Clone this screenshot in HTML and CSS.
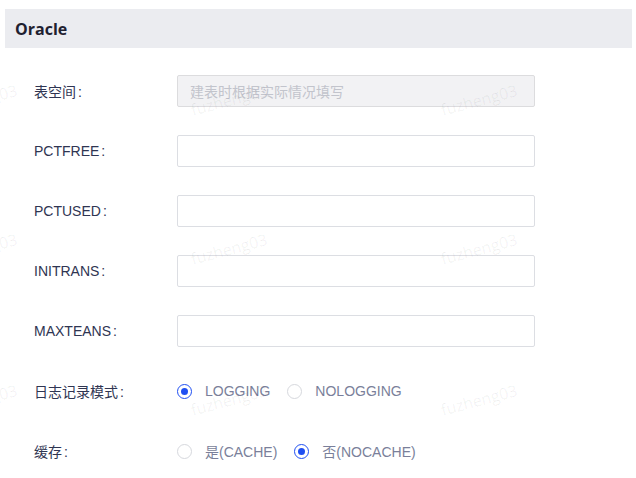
FILE: index.html
```html
<!DOCTYPE html>
<html lang="zh-CN">
<head>
<meta charset="utf-8">
<title>Oracle</title>
<link rel="stylesheet" href="styles.css">
</head>
<body>
<div class="page">
  <div class="panel-header">Oracle</div>
  <div class="form">
    <div class="row">
      <div class="label">表空间<span class="colon">:</span></div>
      <div class="input disabled"><span class="placeholder">建表时根据实际情况填写</span></div>
    </div>
    <div class="row">
      <div class="label">PCTFREE<span class="colon">:</span></div>
      <div class="input"></div>
    </div>
    <div class="row">
      <div class="label">PCTUSED<span class="colon">:</span></div>
      <div class="input"></div>
    </div>
    <div class="row">
      <div class="label">INITRANS<span class="colon">:</span></div>
      <div class="input"></div>
    </div>
    <div class="row">
      <div class="label">MAXTEANS<span class="colon">:</span></div>
      <div class="input"></div>
    </div>
    <div class="row">
      <div class="label">日志记录模式<span class="colon">:</span></div>
      <div class="radios">
        <label class="radio"><span class="circle checked"></span><span class="rtext">LOGGING</span></label>
        <label class="radio"><span class="circle"></span><span class="rtext">NOLOGGING</span></label>
      </div>
    </div>
    <div class="row">
      <div class="label">缓存<span class="colon">:</span></div>
      <div class="radios">
        <label class="radio"><span class="circle"></span><span class="rtext">是(CACHE)</span></label>
        <label class="radio"><span class="circle checked"></span><span class="rtext">否(NOCACHE)</span></label>
      </div>
    </div>
  </div>
  <div class="watermarks">
    <span class="wm wm-a1">fuzheng03</span>
    <span class="wm wm-a2">fuzheng03</span>
    <span class="wm wm-a3">fuzheng03</span>
    <span class="wm wm-b1">fuzheng03</span>
    <span class="wm wm-b2">fuzheng03</span>
    <span class="wm wm-b3">fuzheng03</span>
    <span class="wm wm-c1">fuzheng03</span>
    <span class="wm wm-c2">fuzheng03</span>
    <span class="wm wm-c3">fuzheng03</span>
  </div>
</div>
</body>
</html>
```

FILE: styles.css
```css
html, body {
  margin: 0;
  padding: 0;
  background: #ffffff;
}

body {
  font-family: "Liberation Sans", "Noto Sans CJK SC", sans-serif;
  width: 636px;
  height: 478px;
  overflow: hidden;
}

.page {
  position: relative;
  width: 636px;
  height: 478px;
  padding-top: 9px;
  box-sizing: border-box;
}

.panel-header {
  margin: 0 4px 0 5px;
  height: 39px;
  background: #ebecf0;
  display: flex;
  align-items: center;
  padding-left: 10px;
  font-family: "Open Sans", "Noto Sans CJK SC", sans-serif;
  font-weight: 700;
  font-size: 16px;
  color: #1e2130;
}

.form {
  display: flex;
  flex-direction: column;
  gap: 28px;
  padding: 27px 0 0 34px;
}

.row {
  display: flex;
  align-items: center;
  height: 32px;
}

.label {
  width: 143px;
  flex: none;
  font-size: 14px;
  color: #2f3552;
  white-space: nowrap;
}

.colon {
  margin-left: 2px;
}

.input {
  width: 358px;
  height: 32px;
  box-sizing: border-box;
  border: 1px solid #dcdee3;
  border-radius: 2px;
  background: #ffffff;
  display: flex;
  align-items: center;
  padding-left: 12px;
}

.input.disabled {
  background: #f2f2f4;
  border-color: #dcdcde;
}

.placeholder {
  font-size: 14px;
  color: #c2c4cc;
}

.radios {
  display: flex;
  align-items: center;
  gap: 17px;
}

.radio {
  display: flex;
  align-items: center;
  gap: 13px;
}

.circle {
  width: 15px;
  height: 15px;
  box-sizing: border-box;
  border: 1px solid #d6d8dd;
  border-radius: 50%;
  background: #ffffff;
  position: relative;
  flex: none;
}

.circle.checked {
  border: 1.5px solid #1f4ff2;
}

.circle.checked::after {
  content: "";
  position: absolute;
  left: 50%;
  top: 50%;
  width: 7px;
  height: 7px;
  margin: -3.5px 0 0 -3.5px;
  border-radius: 50%;
  background: #1f4ff2;
}

.rtext {
  font-size: 14px;
  color: #7a7f9a;
  white-space: nowrap;
}

.watermarks {
  position: absolute;
  inset: 0;
  pointer-events: none;
  overflow: hidden;
}

.wm {
  position: absolute;
  font-family: "Open Sans", sans-serif;
  font-size: 16px;
  line-height: 16px;
  color: rgba(0, 0, 0, 0.06);
  white-space: nowrap;
  transform: translate(-50%, -50%) rotate(-15deg);
}

.wm-a1 { left: -21px; top: 100px; }
.wm-a2 { left: 229px; top: 100px; }
.wm-a3 { left: 479px; top: 100px; }
.wm-b1 { left: -21px; top: 249px; }
.wm-b2 { left: 229px; top: 249px; }
.wm-b3 { left: 479px; top: 249px; }
.wm-c1 { left: -21px; top: 400px; }
.wm-c2 { left: 229px; top: 400px; }
.wm-c3 { left: 479px; top: 400px; }
```
